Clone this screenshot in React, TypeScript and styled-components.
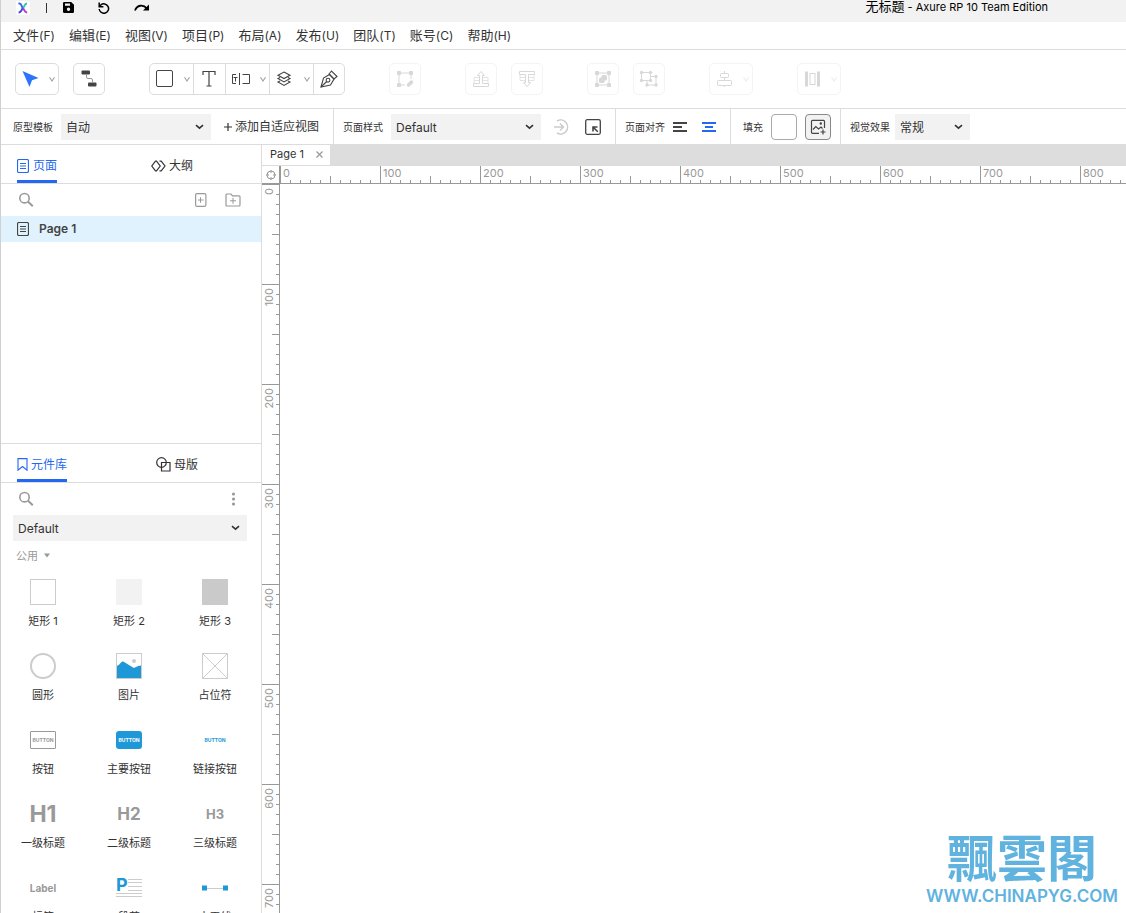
import React from 'react';
import styled, { createGlobalStyle, css } from 'styled-components';

const color = {
  text: '#333333',
  muted: '#999999',
  line: '#dcdcdc',
  field: '#f2f2f2',
  accent: '#2468f2',
  widget: '#1e98d7',
  shape: '#cccccc',
};

const GlobalStyle = createGlobalStyle`
  *, *::before, *::after { box-sizing: border-box; }
  body {
    margin: 0;
    background: #ffffff;
    color: ${color.text};
    font-family: Inter, "Noto Sans CJK SC", sans-serif;
    font-size: 12px;
    line-height: 16px;
  }
  button, select, input {
    font: inherit;
    color: inherit;
    margin: 0;
  }
  button {
    padding: 0;
    border: 0;
    background: none;
  }
  svg { display: block; flex: none; }
`;

const Window = styled.div`
  display: flex;
  flex-direction: column;
  height: 100vh;
  overflow: hidden;
  border-left: 1px solid #d0d0d0;
`;

/* ---------- title bar and menu ---------- */

const TitleBar = styled.header`
  display: flex;
  flex: none;
  align-items: flex-start;
  height: 22px;
  padding: 0 78px 0 15px;
  background: ${color.field};
  color: #000000;
`;

const QuickActions = styled.div`
  display: flex;
  align-items: center;
  height: 15px;
`;

const QuickButton = styled.button`
  display: flex;
  margin-left: 24px;
`;

const QuickDivider = styled.span`
  width: 1px;
  height: 10px;
  margin: 0 -8px 0 16px;
  background: #333333;
`;

const WindowTitle = styled.h1`
  margin: 0 0 0 auto;
  font-size: 11px;
  font-weight: 400;
  line-height: 12px;
  white-space: nowrap;
`;

const TitleName = styled.span`
  font-size: 13px;
`;

const MenuBar = styled.nav`
  display: flex;
  flex: none;
  align-items: center;
  gap: 14px;
  height: 28px;
  padding: 0 12px;
  border-bottom: 1px solid ${color.line};
`;

const MenuButton = styled.button`
  font-size: 13px;
  line-height: 18px;
  white-space: nowrap;
`;

const MenuKey = styled.span`
  font-size: 12px;
`;

/* ---------- tool bar ---------- */

const ToolBar = styled.div`
  display: flex;
  flex: none;
  align-items: center;
  gap: 44px;
  height: 59px;
  padding: 0 14px;
  border-bottom: 1px solid ${color.line};
`;

const ToolSet = styled.div`
  display: flex;
  gap: 14px;
`;

const toolFrame = css`
  border: 1px solid ${color.line};
  border-radius: 5px;
`;

const ToolButton = styled.button<{ $wide?: boolean }>`
  ${toolFrame}
  display: flex;
  align-items: center;
  justify-content: ${(p) => (p.$wide ? 'space-between' : 'center')};
  width: ${(p) => (p.$wide ? 44 : 32)}px;
  height: 32px;
  padding: ${(p) => (p.$wide ? '0 2px 0 6px' : '0')};
  color: #444444;
  &:disabled {
    border-color: #f4f4f4;
    color: #d8d8d8;
  }
`;

const ToolGroup = styled.div`
  ${toolFrame}
  display: flex;
  height: 32px;
  & > button {
    height: 30px;
    border-width: 0 0 0 1px;
    border-radius: 0;
  }
  & > button:first-child {
    width: 43px;
    border-left-width: 0;
  }
  & > button:last-child { width: 31px; }
`;

/* ---------- property bar ---------- */

const PropertyBar = styled.div`
  display: flex;
  flex: none;
  height: 36px;
  border-bottom: 1px solid ${color.line};
`;

const PropertyGroup = styled.div<{ $lead?: number; $trail?: number; $gap?: number }>`
  display: flex;
  align-items: center;
  gap: ${(p) => p.$gap ?? 8}px;
  padding: 0 ${(p) => p.$trail ?? 9}px 0 ${(p) => p.$lead ?? 9}px;
  & + & { border-left: 1px solid ${color.line}; }
`;

const FieldLabel = styled.label`
  font-size: 10px;
  white-space: nowrap;
`;

const SelectFrame = styled.span<{ $width?: string }>`
  display: grid;
  flex: none;
  align-items: center;
  width: ${(p) => p.$width ?? 'auto'};
  height: 26px;
  background: ${color.field};
  & > * { grid-area: 1 / 1; }
  & > svg {
    justify-self: end;
    margin-right: 7px;
    pointer-events: none;
  }
`;

const SelectInput = styled.select`
  width: 100%;
  height: 26px;
  padding: 2px 24px 0 5px;
  border: 0;
  border-radius: 0;
  appearance: none;
  background: transparent;
`;

const AddView = styled.button`
  display: flex;
  align-items: center;
  gap: 3px;
  padding: 0 5px;
  white-space: nowrap;
`;

const IconButton = styled.button<{ $tone?: string }>`
  display: flex;
  flex: none;
  align-items: center;
  justify-content: center;
  color: ${(p) => p.$tone ?? '#444444'};
`;

const IconPair = styled.div<{ $gap: number; $inset?: number }>`
  display: flex;
  align-items: center;
  gap: ${(p) => p.$gap}px;
  padding: 0 ${(p) => p.$inset ?? 0}px;
`;

const BoxButton = styled(IconButton)<{ $filled?: boolean }>`
  width: 26px;
  height: 26px;
  border: 1px solid ${(p) => (p.$filled ? '#888888' : '#aaaaaa')};
  border-radius: 4px;
  background: ${(p) => (p.$filled ? color.field : '#ffffff')};
`;

/* ---------- work area ---------- */

const Workspace = styled.main`
  display: flex;
  flex: 1;
  min-height: 0;
`;

const Sidebar = styled.aside`
  display: flex;
  flex: none;
  flex-direction: column;
  width: 261px;
  border-right: 1px solid ${color.line};
`;

const Panel = styled.section<{ $share: number }>`
  display: flex;
  flex: ${(p) => p.$share} 1 0;
  flex-direction: column;
  min-height: 0;
  overflow: hidden;
  & + & { border-top: 1px solid ${color.line}; }
`;

const PanelTabs = styled.div`
  display: flex;
  flex: none;
  height: 39px;
  padding-left: 16px;
  border-bottom: 1px solid ${color.line};
`;

const TabSlot = styled.div<{ $second?: boolean }>`
  display: flex;
  flex: none;
  width: ${(p) => (p.$second ? 'auto' : '134px')};
`;

const PanelTab = styled.button<{ $active?: boolean; $gap: number; $inset?: number }>`
  display: flex;
  align-items: center;
  gap: ${(p) => p.$gap}px;
  height: 38px;
  padding-top: ${(p) => (p.$active ? 7 : 4)}px;
  margin-left: ${(p) => p.$inset ?? 0}px;
  border-bottom: ${(p) => (p.$active ? `3px solid ${color.accent}` : '0')};
  color: ${(p) => (p.$active ? color.accent : color.text)};
  white-space: nowrap;
`;

const SearchRow = styled.div`
  display: flex;
  flex: none;
  align-items: center;
  height: 32px;
  padding: 0 20px 0 17px;
`;

const SearchField = styled.label`
  display: flex;
  flex: 1;
  align-items: center;
  gap: 8px;
  min-width: 0;
  color: ${color.muted};
`;

const SearchInput = styled.input`
  flex: 1;
  min-width: 0;
  border: 0;
  outline: 0;
  background: transparent;
`;

const PageRow = styled.button`
  display: flex;
  flex: none;
  align-items: center;
  gap: 10px;
  height: 26px;
  padding: 0 16px;
  background: #dff2fd;
  color: #444444;
  font-weight: 600;
`;

const LibraryPicker = styled.div`
  display: flex;
  flex: none;
  padding: 0 14px 0 12px;
`;

const CategoryButton = styled.button`
  display: flex;
  flex: none;
  align-items: center;
  gap: 6px;
  height: 30px;
  padding: 0 15px;
  color: ${color.muted};
  font-size: 11px;
`;

const WidgetGrid = styled.ul`
  display: grid;
  grid-template-columns: repeat(3, 86px);
  grid-auto-rows: 74px;
  margin: 0;
  padding: 8px 0 0;
  list-style: none;
`;

const Widget = styled.li`
  display: flex;
  flex-direction: column;
  align-items: center;
  gap: 8px;
  padding-right: 2px;
  font-size: 11px;
  white-space: nowrap;
`;

const WidgetIcon = styled.span`
  display: flex;
  align-items: center;
  justify-content: center;
  height: 26px;
`;

const Swatch = styled.span<{ $fill: string; $line?: boolean; $round?: boolean }>`
  width: 26px;
  height: 26px;
  border: ${(p) => (p.$round ? 2 : p.$line ? 1 : 0)}px solid ${color.shape};
  border-radius: ${(p) => (p.$round ? '50%' : '0')};
  background: ${(p) => p.$fill};
`;

const MiniButton = styled.span<{ $kind: 'plain' | 'primary' | 'link' }>`
  display: flex;
  align-items: center;
  justify-content: center;
  width: 26px;
  height: 18px;
  border: ${(p) => (p.$kind === 'plain' ? `1px solid ${color.muted}` : '0')};
  border-radius: ${(p) => (p.$kind === 'plain' ? 1 : 3)}px;
  background: ${(p) => (p.$kind === 'primary' ? color.widget : 'transparent')};
  color: ${(p) => ({ plain: color.muted, primary: '#ffffff', link: color.widget })[p.$kind]};
  font-size: 5px;
  font-weight: 700;
  line-height: 8px;
`;

const Sample = styled.span<{ $size: number }>`
  color: ${color.muted};
  font-size: ${(p) => p.$size}px;
  font-weight: 700;
`;

const Paragraph = styled.span`
  display: grid;
  & > * { grid-area: 1 / 1; }
`;

const ParagraphInitial = styled.span`
  color: ${color.widget};
  font-size: 18px;
  font-weight: 700;
  line-height: 14px;
`;

/* ---------- editor ---------- */

const Editor = styled.section`
  display: grid;
  flex: 1;
  grid-template-columns: 18px 1fr;
  grid-template-rows: 21px 18px 1fr;
  min-width: 0;
  min-height: 0;
`;

const DocumentTabs = styled.div`
  display: flex;
  grid-column: 1 / -1;
  background: #dddddd;
  border-bottom: 1px solid ${color.line};
`;

const DocumentTab = styled.div`
  display: flex;
  align-items: center;
  gap: 12px;
  padding: 0 7px 2px 8px;
  background: #ffffff;
  font-size: 11px;
`;

const Corner = styled.div`
  display: flex;
  align-items: center;
  justify-content: center;
  border-right: 1px solid ${color.muted};
  border-bottom: 1px solid ${color.muted};
`;

const Ruler = styled.div<{ $vertical?: boolean }>`
  display: flex;
  flex-direction: ${(p) => (p.$vertical ? 'column' : 'row')};
  overflow: hidden;
  border: 0 solid ${color.muted};
  border-width: ${(p) => (p.$vertical ? '0 1px 0 0' : '0 0 1px 0')};
`;

const tick = `${color.muted} 0 1px, transparent 1px`;

const RulerStep = styled.span<{ $vertical?: boolean }>`
  flex: none;
  color: ${color.muted};
  font-size: 11px;
  line-height: 14px;
  ${(p) =>
    p.$vertical
      ? css`
          height: 100px;
          padding-top: 4px;
          background:
            linear-gradient(${color.muted}, ${color.muted}) 0 0 / 17px 1px no-repeat,
            linear-gradient(${color.muted}, ${color.muted}) 100% 50px / 7px 1px no-repeat,
            repeating-linear-gradient(180deg, ${tick} 10px) 100% 0 / 3px 100% no-repeat;
        `
      : css`
          width: 100px;
          padding-left: 3px;
          background:
            linear-gradient(${color.muted}, ${color.muted}) 0 0 / 1px 17px no-repeat,
            linear-gradient(${color.muted}, ${color.muted}) 50px 100% / 1px 7px no-repeat,
            repeating-linear-gradient(90deg, ${tick} 10px) 0 100% / 100% 3px no-repeat;
        `}
`;

const UprightLabel = styled.span`
  display: block;
  width: 14px;
  writing-mode: vertical-rl;
  transform: rotate(180deg);
`;

const Canvas = styled.div`
  position: relative;
  background: #ffffff;
`;

const Watermark = styled.div`
  position: absolute;
  right: 8px;
  bottom: 6px;
  display: flex;
  flex-direction: column;
  align-items: center;
  color: #60b3df;
`;

const WatermarkName = styled.span`
  font-family: "Noto Sans CJK TC", sans-serif;
  font-size: 50px;
  font-weight: 700;
  line-height: 60px;
`;

const WatermarkUrl = styled.span`
  font-family: Inter, sans-serif;
  font-size: 17px;
  font-weight: 600;
  line-height: 22px;
`;

/* ---------- icons ---------- */

type IconProps = { w: number; h: number; children: React.ReactNode };

const Icon = ({ w, h, children }: IconProps) => (
  <svg width={w} height={h} viewBox={`0 0 ${w} ${h}`} fill="none" stroke="currentColor" aria-hidden="true">
    {children}
  </svg>
);

const Chevron = () => (
  <Icon w={8} h={8}>
    <path d="M1.5 2.2 4 6l2.5-3.8" strokeOpacity="0.5" strokeWidth="1.1" />
  </Icon>
);

const SelectChevron = () => (
  <Icon w={9} h={8}>
    <path d="m1 2.2 3.5 3 3.5-3" strokeWidth="1.6" />
  </Icon>
);

const LogoIcon = () => (
  <Icon w={14} h={14}>
    <rect width="14" height="14" rx="2" fill="#ffffff" stroke="none" />
    <path d="M2.4 2.5h1.2c2 0 2 3.5 3.4 5" stroke="#2f6df0" strokeWidth="1.9" />
    <path d="M11 2.5c-2.5 0-2.5 3-3.8 4.5" stroke="#2fc9a0" strokeWidth="1.9" />
    <path d="M6.8 7c-1.2 1.5-1.3 4.5-4.2 4.5" stroke="#3a49e0" strokeWidth="1.9" />
    <path d="M7 7c1.3 1.5 1.2 4.5 4.2 4.5" stroke="#b53be0" strokeWidth="1.9" />
  </Icon>
);

const SaveIcon = () => (
  <Icon w={11} h={11}>
    <path
      d="M1.2 0h7L11 2.8v7A1.2 1.2 0 0 1 9.8 11H1.2A1.2 1.2 0 0 1 0 9.8V1.2A1.2 1.2 0 0 1 1.2 0ZM2 1.6v2.2h5V1.6ZM5.5 5.6a1.7 1.7 0 1 0 0 3.4 1.7 1.7 0 0 0 0-3.4Z"
      fill="currentColor"
      fillRule="evenodd"
      stroke="none"
    />
  </Icon>
);

const UndoIcon = () => (
  <Icon w={12} h={12}>
    <path d="M1.2 7A4.7 4.7 0 1 0 2.8 3L1.5 4.2" strokeWidth="1.5" />
    <path d="M1.2 0.5v4.2h4.2" strokeWidth="1.5" />
  </Icon>
);

const RedoIcon = () => (
  <Icon w={16} h={9}>
    <path d="M1 7.5C3 2 9 1 13 5.5" strokeWidth="1.8" />
    <path d="M15 1.5v6H9Z" fill="currentColor" stroke="none" />
  </Icon>
);

const CursorIcon = () => (
  <Icon w={17} h={17}>
    <path d="m0.500 0 16 7-6.500 2.200L7.500 16Z" fill="#2e73fa" stroke="none" />
  </Icon>
);

const ConnectorIcon = () => (
  <Icon w={16} h={18}>
    <rect x="0.500" y="0.500" width="8.500" height="4" rx="1" fill="currentColor" stroke="none" />
    <rect x="7" y="12.500" width="8.500" height="4" rx="1" fill="currentColor" stroke="none" />
    <path d="M5.500 4.500V7q0 1.500 1.500 1.500h3q1.500 0 1.500 1.500v2.500" stroke="#999999" />
  </Icon>
);

const RectangleIcon = () => (
  <Icon w={18} h={18}>
    <rect x="0.500" y="0.500" width="16" height="16" rx="1.500" />
  </Icon>
);

const TextIcon = () => (
  <Icon w={16} h={16}>
    <path d="M1 4V0.500h12V4M7 0.500v14.500M4.500 15h5" strokeWidth="1.2" />
  </Icon>
);

const FormIcon = () => (
  <Icon w={20} h={12}>
    <path d="M4 1.500H0.500v9h3.500M1.500 4.500h4M3.500 4.500v4M7.500 0v12M10.500 1.500h7v9h-7" />
  </Icon>
);

const LayersIcon = () => (
  <Icon w={16} h={16}>
    <path d="m8 1 6 3.200-6 3.300L2 4.200ZM4 6.500 2 7.600l6 3.300 6-3.300-2-1.100M4 10l-2 1.100 6 3.300 6-3.300-2-1.100" strokeWidth="1.1" />
  </Icon>
);

const PenIcon = () => (
  <Icon w={18} h={18}>
    <path d="M1 17 3.500 8l6-3.500 4.500 4.500-3.500 6Z" strokeWidth="1.1" />
    <path d="m9 4 2.500-3L17 6.500l-3 2.500Z" strokeWidth="1.1" />
    <circle cx="8" cy="10.200" r="1.900" strokeWidth="1.1" />
    <path d="m1 17 5.700-5.500" strokeWidth="1.1" />
  </Icon>
);

const EditPointsIcon = () => (
  <Icon w={18} h={18}>
    <path d="M5 3h8M3 5v8M15 5v4M5 15h4" />
    <g fill="currentColor" stroke="none">
      <rect x="1" y="1" width="4" height="4" rx="0.800" />
      <rect x="13" y="1" width="4" height="4" rx="0.800" />
      <rect x="1" y="13" width="4" height="4" rx="0.800" />
    </g>
    <path d="m12.500 15 3-3" strokeWidth="3.500" strokeLinecap="round" />
  </Icon>
);

const FrontIcon = () => (
  <Icon w={18} h={18}>
    <path d="M7 7.500H2v3h5M11 7.500h5v3h-5M2 10.500v3M16 10.500v3" strokeOpacity="0.7" />
    <path d="M1.500 13.500h6V5.500h-2L9 1.500l3.500 4h-2v8h6v3h-15Z" />
  </Icon>
);

const BackIcon = () => (
  <Icon w={18} h={18}>
    <path d="M7 10.500H2v-3h5M11 10.500h5v-3h-5M2 7.500v-3M16 7.500v-3" strokeOpacity="0.7" />
    <path d="M1.500 4.500h6v8h-2L9 16.500l3.500-4h-2v-8h6v-3h-15Z" />
  </Icon>
);

const GroupIcon = () => (
  <Icon w={18} h={18}>
    <rect x="3" y="3" width="12" height="12" />
    <g fill="currentColor" stroke="none">
      <rect x="1" y="1" width="4" height="4" rx="0.800" />
      <rect x="13" y="1" width="4" height="4" rx="0.800" />
      <rect x="1" y="13" width="4" height="4" rx="0.800" />
      <rect x="13" y="13" width="4" height="4" rx="0.800" />
      <rect x="7.500" y="5" width="5.500" height="5.500" rx="1.500" />
      <rect x="5" y="7.500" width="5.500" height="5.500" rx="1.500" />
    </g>
  </Icon>
);

const UngroupIcon = () => (
  <Icon w={20} h={18}>
    <path d="M2.500 2.500h9v8h-9ZM11.500 6.500h5.500v8.500H8v-4" />
    <g fill="currentColor" stroke="none">
      <circle cx="2.500" cy="2.500" r="1.700" />
      <circle cx="11.500" cy="2.500" r="1.700" />
      <circle cx="2.500" cy="10.500" r="1.700" />
      <circle cx="11.500" cy="10.500" r="1.700" />
      <circle cx="17" cy="6.500" r="1.700" />
      <circle cx="17" cy="15" r="1.700" />
      <circle cx="8" cy="15" r="1.700" />
    </g>
  </Icon>
);

const AlignIcon = () => (
  <Icon w={17} h={18}>
    <rect x="4.500" y="3.500" width="8" height="4" rx="0.800" />
    <rect x="1.500" y="10.500" width="14" height="5" rx="0.800" />
    <path d="M8.500 1v2.500M8.500 7.500v3M8.500 15.500v1.500" />
  </Icon>
);

const DistributeIcon = () => (
  <Icon w={17} h={16}>
    <path d="M2.500 0.500v15M14.500 0.500v15" strokeWidth="3" />
    <rect x="6" y="2.500" width="5" height="11" />
  </Icon>
);

const GoIcon = () => (
  <Icon w={16} h={16}>
    <path d="M4 2a7 7 0 1 1 0 12M1 8h9M7 4.500 10.500 8 7 11.500" strokeWidth="1.5" />
  </Icon>
);

const LocateIcon = () => (
  <Icon w={16} h={16}>
    <rect x="0.700" y="0.700" width="14.600" height="14.600" rx="1.500" strokeWidth="1.3" />
    <path d="M8 12.500V8h4.500M8 8l4.800 4.800" strokeWidth="1.6" />
  </Icon>
);

const AlignLeftIcon = () => (
  <Icon w={14} h={10}>
    <path d="M0 1h14M0 5h9M0 9h14" strokeWidth="2" />
  </Icon>
);

const AlignCenterIcon = () => (
  <Icon w={14} h={10}>
    <path d="M0 1h14M3 5h8M0 9h14" strokeWidth="2" />
  </Icon>
);

const FillImageIcon = () => (
  <Icon w={16} h={16}>
    <path d="M9 14.300H2.500a1 1 0 0 1-1-1v-11a1 1 0 0 1 1-1h11a1 1 0 0 1 1 1V9" strokeWidth="1.2" />
    <path d="m3 10.500 2.800-3L8.500 10l2.500-2 1.500 1.500M13 10.500v5M10.500 13h5" strokeWidth="1.2" />
    <circle cx="10.800" cy="4.500" r="1.200" fill="currentColor" stroke="none" />
  </Icon>
);

const PageIcon = () => (
  <Icon w={12} h={14}>
    <rect x="0.500" y="0.500" width="11" height="13" rx="1.500" strokeWidth="1.2" />
    <path d="M3 4.500h6M3 7h6M3 9.500h6" />
  </Icon>
);

const OutlineIcon = () => (
  <Icon w={15} h={12}>
    <path d="M4.500 1.200h1L9.200 6l-3.700 4.800h-1L0.800 6ZM8.500 1.200h1.700L14 6l-3.800 4.800H8.500" strokeWidth="1.2" />
  </Icon>
);

const BookmarkIcon = () => (
  <Icon w={11} h={13}>
    <path d="M1 0.600h9v11.600L5.500 8.500 1 12.200Z" strokeWidth="1.1" />
  </Icon>
);

const MasterIcon = () => (
  <Icon w={15} h={15}>
    <circle cx="5.500" cy="5.500" r="4.800" strokeWidth="1.2" />
    <path d="M5.500 5.500h8.500V14H5.500Z" strokeWidth="1.2" />
  </Icon>
);

const SearchIcon = () => (
  <Icon w={16} h={16}>
    <circle cx="6.500" cy="6.200" r="4.700" strokeWidth="1.6" />
    <path d="m9.800 9.500 5 4.800" strokeWidth="1.9" />
  </Icon>
);

const AddPageIcon = () => (
  <Icon w={12} h={14}>
    <rect x="0.600" y="0.600" width="10.300" height="12.800" rx="1.500" strokeWidth="1.2" />
    <path d="M5.500 4.200v5.600M3 7h5.600" />
  </Icon>
);

const AddFolderIcon = () => (
  <Icon w={16} h={14}>
    <path d="M1 2Q1 1 2 1h4l1.500 1.800H14q1 0 1 1V12q0 1-1 1H2q-1 0-1-1Z" strokeWidth="1.2" />
    <path d="M8 4.800v6M5 7.800h6" />
  </Icon>
);

const MoreIcon = () => (
  <Icon w={15} h={14}>
    <g fill="currentColor" stroke="none">
      <circle cx="7.500" cy="2" r="1.600" />
      <circle cx="7.500" cy="7" r="1.600" />
      <circle cx="7.500" cy="12" r="1.600" />
    </g>
  </Icon>
);

const PlusIcon = () => (
  <Icon w={8} h={8}>
    <path d="M4 0v8M0 4h8" strokeWidth="1.2" />
  </Icon>
);

const CloseIcon = () => (
  <Icon w={7} h={7}>
    <path d="m0.500 0.500 6 6M6.500 0.500l-6 6" strokeWidth="1.2" />
  </Icon>
);

const CaretIcon = () => (
  <Icon w={6} h={5}>
    <path d="M0 0.500h6L3 4.500Z" fill="currentColor" stroke="none" />
  </Icon>
);

const OriginIcon = () => (
  <Icon w={10} h={10}>
    <circle cx="5" cy="5" r="4" stroke="#999999" />
    <path d="M5 0v3M5 7v3M0 5h3M7 5h3" stroke="#999999" />
  </Icon>
);

const ImageWidgetIcon = () => (
  <Icon w={26} h={26}>
    <rect x="0.500" y="0.500" width="25" height="25" stroke="#cccccc" />
    <path
      d="M1 13Q3.500 11.500 5 9.500 6.500 7.800 8.500 9.200L17 14.500q1.500.8 3-.5 2-1.500 5-1.500V25H1Z"
      fill="#1e98d7"
      stroke="none"
    />
    <circle cx="18" cy="8" r="2" fill="#cccccc" stroke="none" />
  </Icon>
);

const PlaceholderIcon = () => (
  <Icon w={26} h={26}>
    <path d="M0.500 0.500h25v25h-25ZM0.500 0.500l25 25M25.500 0.500l-25 25" stroke="#cccccc" />
  </Icon>
);

const ParagraphLines = () => (
  <Icon w={26} h={19}>
    <path d="M12 1.500h14M12 4.500h14M12 8.500h14M12 12.500h14M0 15.500h26M0 18.500h26" stroke="#cccccc" />
  </Icon>
);

const LineWidgetIcon = () => (
  <Icon w={26} h={6}>
    <path d="M4 3.500h18" stroke="#cccccc" />
    <rect y="0.500" width="5" height="5" fill="#1e98d7" stroke="none" />
    <rect x="21" y="0.500" width="5" height="5" fill="#1e98d7" stroke="none" />
  </Icon>
);

/* ---------- data ---------- */

const menus: [string, string][] = [
  ['文件', 'F'],
  ['编辑', 'E'],
  ['视图', 'V'],
  ['项目', 'P'],
  ['布局', 'A'],
  ['发布', 'U'],
  ['团队', 'T'],
  ['账号', 'C'],
  ['帮助', 'H'],
];

const widgets: { name: string; icon: React.ReactNode }[] = [
  { name: '矩形 1', icon: <Swatch $fill="#ffffff" $line /> },
  { name: '矩形 2', icon: <Swatch $fill="#f2f2f2" /> },
  { name: '矩形 3', icon: <Swatch $fill="#cacaca" /> },
  { name: '圆形', icon: <Swatch $fill="#ffffff" $round /> },
  { name: '图片', icon: <ImageWidgetIcon /> },
  { name: '占位符', icon: <PlaceholderIcon /> },
  { name: '按钮', icon: <MiniButton $kind="plain">BUTTON</MiniButton> },
  { name: '主要按钮', icon: <MiniButton $kind="primary">BUTTON</MiniButton> },
  { name: '链接按钮', icon: <MiniButton $kind="link">BUTTON</MiniButton> },
  { name: '一级标题', icon: <Sample $size={23}>H1</Sample> },
  { name: '二级标题', icon: <Sample $size={17}>H2</Sample> },
  { name: '三级标题', icon: <Sample $size={13}>H3</Sample> },
  { name: '标签', icon: <Sample $size={10}>Label</Sample> },
  {
    name: '段落',
    icon: (
      <Paragraph>
        <ParagraphLines />
        <ParagraphInitial>P</ParagraphInitial>
      </Paragraph>
    ),
  },
  { name: '水平线', icon: <LineWidgetIcon /> },
];

const steps = (count: number) => Array.from({ length: count }, (_, i) => i * 100);

type DropDownProps = { id: string; value: string; width?: string; label?: string };

const DropDown = ({ id, value, width, label }: DropDownProps) => (
  <SelectFrame $width={width}>
    <SelectInput id={id} aria-label={label} defaultValue={value}>
      <option>{value}</option>
    </SelectInput>
    <SelectChevron />
  </SelectFrame>
);

export default function App() {
  return (
    <Window>
      <GlobalStyle />
      <TitleBar>
        <QuickActions>
          <LogoIcon />
          <QuickDivider />
          <QuickButton aria-label="保存"><SaveIcon /></QuickButton>
          <QuickButton aria-label="撤销"><UndoIcon /></QuickButton>
          <QuickButton aria-label="重做"><RedoIcon /></QuickButton>
        </QuickActions>
        <WindowTitle><TitleName>无标题</TitleName> - Axure RP 10 Team Edition</WindowTitle>
      </TitleBar>

      <MenuBar>
        {menus.map(([name, key]) => (
          <MenuButton key={key}>{name}<MenuKey>({key})</MenuKey></MenuButton>
        ))}
      </MenuBar>

      <ToolBar>
        <ToolSet>
          <ToolButton $wide aria-label="选择"><CursorIcon /><Chevron /></ToolButton>
          <ToolButton aria-label="连接"><ConnectorIcon /></ToolButton>
        </ToolSet>
        <ToolGroup>
          <ToolButton $wide aria-label="矩形"><RectangleIcon /><Chevron /></ToolButton>
          <ToolButton aria-label="文本"><TextIcon /></ToolButton>
          <ToolButton $wide aria-label="表单"><FormIcon /><Chevron /></ToolButton>
          <ToolButton $wide aria-label="图层"><LayersIcon /><Chevron /></ToolButton>
          <ToolButton aria-label="钢笔"><PenIcon /></ToolButton>
        </ToolGroup>
        <ToolButton disabled aria-label="编辑点"><EditPointsIcon /></ToolButton>
        <ToolSet>
          <ToolButton disabled aria-label="置于顶层"><FrontIcon /></ToolButton>
          <ToolButton disabled aria-label="置于底层"><BackIcon /></ToolButton>
        </ToolSet>
        <ToolSet>
          <ToolButton disabled aria-label="组合"><GroupIcon /></ToolButton>
          <ToolButton disabled aria-label="取消组合"><UngroupIcon /></ToolButton>
        </ToolSet>
        <ToolButton $wide disabled aria-label="对齐"><AlignIcon /><Chevron /></ToolButton>
        <ToolButton $wide disabled aria-label="分布"><DistributeIcon /><Chevron /></ToolButton>
      </ToolBar>

      <PropertyBar>
        <PropertyGroup $lead={12}>
          <FieldLabel htmlFor="template">原型模板</FieldLabel>
          <DropDown id="template" value="自动" width="150px" />
          <AddView><PlusIcon />添加自适应视图</AddView>
        </PropertyGroup>
        <PropertyGroup $trail={10}>
          <FieldLabel htmlFor="page-style">页面样式</FieldLabel>
          <DropDown id="page-style" value="Default" width="150px" />
          <IconPair $gap={16} $inset={4}>
            <IconButton $tone="#cccccc" aria-label="更新样式"><GoIcon /></IconButton>
            <IconButton aria-label="定位样式"><LocateIcon /></IconButton>
          </IconPair>
        </PropertyGroup>
        <PropertyGroup $trail={14}>
          <FieldLabel as="span">页面对齐</FieldLabel>
          <IconPair $gap={15}>
            <IconButton aria-label="左对齐"><AlignLeftIcon /></IconButton>
            <IconButton $tone={color.accent} aria-label="居中对齐"><AlignCenterIcon /></IconButton>
          </IconPair>
        </PropertyGroup>
        <PropertyGroup $lead={12}>
          <FieldLabel as="span">填充</FieldLabel>
          <BoxButton aria-label="填充颜色" />
          <BoxButton $filled aria-label="填充图片"><FillImageIcon /></BoxButton>
        </PropertyGroup>
        <PropertyGroup $gap={5}>
          <FieldLabel htmlFor="effect">视觉效果</FieldLabel>
          <DropDown id="effect" value="常规" width="75px" />
        </PropertyGroup>
      </PropertyBar>

      <Workspace>
        <Sidebar>
          <Panel $share={298}>
            <PanelTabs>
              <TabSlot>
                <PanelTab $active $gap={4}><PageIcon />页面</PanelTab>
              </TabSlot>
              <TabSlot $second>
                <PanelTab $gap={3}><OutlineIcon />大纲</PanelTab>
              </TabSlot>
            </PanelTabs>
            <SearchRow>
              <SearchField><SearchIcon /><SearchInput aria-label="搜索页面" /></SearchField>
              <IconPair $gap={18}>
                <IconButton $tone={color.muted} aria-label="添加页面"><AddPageIcon /></IconButton>
                <IconButton $tone={color.muted} aria-label="添加文件夹"><AddFolderIcon /></IconButton>
              </IconPair>
            </SearchRow>
            <PageRow><PageIcon />Page 1</PageRow>
          </Panel>

          <Panel $share={470}>
            <PanelTabs>
              <TabSlot>
                <PanelTab $active $gap={3}><BookmarkIcon />元件库</PanelTab>
              </TabSlot>
              <TabSlot $second>
                <PanelTab $gap={3} $inset={5}><MasterIcon />母版</PanelTab>
              </TabSlot>
            </PanelTabs>
            <SearchRow>
              <SearchField><SearchIcon /><SearchInput aria-label="搜索元件" /></SearchField>
              <IconButton $tone={color.muted} aria-label="更多"><MoreIcon /></IconButton>
            </SearchRow>
            <LibraryPicker>
              <DropDown id="library" value="Default" width="100%" label="元件库" />
            </LibraryPicker>
            <CategoryButton>公用<CaretIcon /></CategoryButton>
            <WidgetGrid>
              {widgets.map((w) => (
                <Widget key={w.name}>
                  <WidgetIcon>{w.icon}</WidgetIcon>
                  {w.name}
                </Widget>
              ))}
            </WidgetGrid>
          </Panel>
        </Sidebar>

        <Editor>
          <DocumentTabs>
            <DocumentTab>
              Page 1
              <IconButton $tone={color.muted} aria-label="关闭"><CloseIcon /></IconButton>
            </DocumentTab>
          </DocumentTabs>
          <Corner><OriginIcon /></Corner>
          <Ruler>
            {steps(20).map((m) => <RulerStep key={m}>{m}</RulerStep>)}
          </Ruler>
          <Ruler $vertical>
            {steps(12).map((m) => (
              <RulerStep key={m} $vertical><UprightLabel>{m}</UprightLabel></RulerStep>
            ))}
          </Ruler>
          <Canvas>
            <Watermark>
              <WatermarkName>飄雲閣</WatermarkName>
              <WatermarkUrl>WWW.CHINAPYG.COM</WatermarkUrl>
            </Watermark>
          </Canvas>
        </Editor>
      </Workspace>
    </Window>
  );
}
